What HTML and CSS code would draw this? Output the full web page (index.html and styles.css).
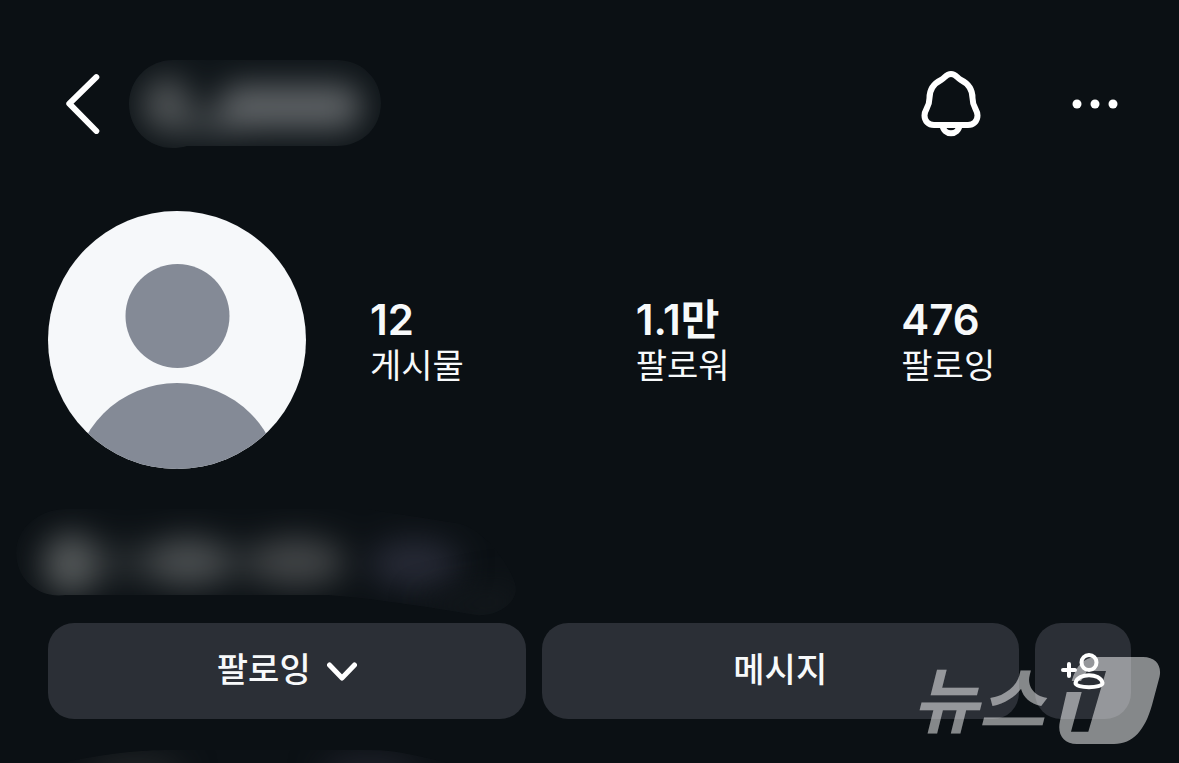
FILE: index.html
```
<!DOCTYPE html>
<html lang="ko">
<head>
  <meta charset="UTF-8" />
  <meta name="viewport" content="width=device-width, initial-scale=1" />
  <title>프로필</title>
  <link rel="stylesheet" href="styles.css">
</head>
<body>
  <header class="topbar">
    <button class="icon-btn" aria-label="뒤로">
      <svg width="34" height="60" viewBox="0 0 34 60"><path d="M30.300 3.200 L3.300 29.700 L30.300 57" /></svg>
    </button>
    <svg class="username" width="252" height="90" viewBox="0 0 252 90" aria-hidden="true">
      <defs>
        <clipPath id="nameClip"><path d="M44 1 H208 C234 1 252 21 252 44 C252 69 233 87 208 87 H58 C26 96 0 74 0 45 C0 20 20 1 44 1 Z" /></clipPath>
        <filter id="soft" x="-100%" y="-100%" width="300%" height="300%" color-interpolation-filters="sRGB"><feGaussianBlur stdDeviation="16" /></filter>
      </defs>
      <g clip-path="url(#nameClip)">
        <rect width="252" height="90" fill="#0f1519" />
        <g filter="url(#soft)">
          <ellipse cx="38" cy="46" rx="25" ry="28" fill="#505456" />
          <rect x="50" y="54" width="60" height="22" fill="#43484b" />
          <rect x="90" y="26" width="142" height="44" rx="18" fill="#606467" />
        </g>
      </g>
    </svg>
    <div class="topbar-actions">
      <button class="icon-btn" aria-label="알림">
        <svg width="60" height="68" viewBox="0 0 60 68">
          <path d="M30 4 C25 4 24 8 20 10 C12 14 8.500 20 8.500 28 C8.500 38 3.500 39 3.500 45.500 C3.500 51 7.500 55 13 55 H47 C52.500 55 56.500 51 56.500 45.500 C56.500 39 51.500 38 51.500 28 C51.500 20 48 14 40 10 C36 8 35 4 30 4 Z" />
          <path d="M21.500 55 C22.500 66 37.500 66 38.500 55" />
        </svg>
      </button>
      <button class="icon-btn" aria-label="더보기">
        <svg class="dots" width="46" height="10" viewBox="0 0 46 10"><circle cx="5" cy="5" r="4.500" /><circle cx="23" cy="5" r="4.500" /><circle cx="41" cy="5" r="4.500" /></svg>
      </button>
    </div>
  </header>

  <main>
    <section class="profile">
      <svg class="avatar" width="258" height="258" viewBox="0 0 258 258" role="img" aria-label="프로필 사진">
        <clipPath id="avatarClip"><circle cx="129" cy="129" r="129" /></clipPath>
        <g clip-path="url(#avatarClip)">
          <rect width="258" height="258" fill="#f6f8fa" />
          <circle cx="129.500" cy="105" r="52" fill="#848a96" />
          <circle cx="129" cy="276" r="104" fill="#848a96" />
        </g>
      </svg>
      <ul class="stats">
        <li><strong>12</strong><span>게시물</span></li>
        <li><strong>1.1만</strong><span>팔로워</span></li>
        <li><strong>476</strong><span>팔로잉</span></li>
      </ul>
    </section>

    <svg class="bio" width="500" height="108" viewBox="0 0 500 108" aria-hidden="true">
      <clipPath id="bioClip"><path d="M50 0 H350 L440 14 C470 18 500 65 500 80 C500 96 478 108 460 106 C410 98 370 91 312 86 H50 C20 90 0 68 0 44 C0 20 22 0 50 0 Z" /></clipPath>
      <g clip-path="url(#bioClip)">
        <rect width="500" height="108" fill="#0c1115" />
        <g filter="url(#soft)">
          <ellipse cx="55" cy="55" rx="29" ry="31" fill="#545859" />
          <rect x="80" y="34" width="250" height="40" fill="#24292c" />
          <ellipse cx="172" cy="53" rx="41" ry="25" fill="#4a4e50" />
          <ellipse cx="280" cy="53" rx="45" ry="25" fill="#424547" />
          <ellipse cx="398" cy="55" rx="46" ry="25" fill="#272a36" />
        </g>
        <path d="M400 94 L500 74 V108 H430 Z" fill="#14191d" filter="url(#soft)" />
      </g>
    </svg>

    <div class="actions">
      <button class="btn">
        팔로잉
        <svg width="30" height="20" viewBox="2 0 30 20"><path d="M4.500 4 L17 17 L29.500 4" /></svg>
      </button>
      <button class="btn">메시지</button>
      <button class="btn" aria-label="사람 추천">
        <svg class="add-user" width="46" height="38" viewBox="0 0 46 38">
          <path d="M3 18 H15 M9 12 V24" />
          <circle cx="29" cy="10.500" r="7.500" />
          <path d="M15.500 31 C18 20.500 40 20.500 42.500 31 C43 36.500 15 36.500 15.500 31 Z" />
        </svg>
      </button>
    </div>

    <svg class="next-row" width="390" height="13" viewBox="0 0 390 13" aria-hidden="true">
      <clipPath id="nextClip"><path d="M0 13 C50 3 80 0 110 0 H310 C340 0 365 8 390 13 Z" /></clipPath>
      <g clip-path="url(#nextClip)">
        <rect width="390" height="13" fill="#0c1115" />
        <ellipse cx="75" cy="24" rx="50" ry="16" fill="#25282a" filter="url(#soft)" />
        <ellipse cx="310" cy="24" rx="50" ry="16" fill="#23252f" filter="url(#soft)" />
      </g>
    </svg>
  </main>

  <div class="watermark">
    <span>뉴스</span>
    <svg width="102" height="88" viewBox="0 0 102 88" aria-hidden="true">
      <path d="M12.700 24 C17 9 25 0 37 0 H84 C97 0 103 9 100.500 20 L93 48 C86 73 74 87 55 87 H18 C4 87 -2 77 1 64 L7.700 35 H22.700 L12 74.700 H29.300 L47 14 H28 L22 24 Z" />
    </svg>
  </div>
</body>
</html>
```
FILE: styles.css
```
* {
  box-sizing: border-box;
}
body {
  margin: 0;
  position: relative;
  background: #0b1014;
  color: #f7f9fa;
  font-family: Inter, 'Noto Sans CJK KR', sans-serif;
}
svg {
  display: block;
  flex-shrink: 0;
}
button {
  border: none;
  padding: 0;
  color: inherit;
  font-family: inherit;
  cursor: pointer;
}
button path, button circle {
  fill: none;
  stroke: #fff;
  stroke-width: 6;
  stroke-linecap: round;
  stroke-linejoin: round;
}
.icon-btn {
  background: none;
}
.topbar {
  display: flex;
  align-items: center;
  padding: 59px 61px 0 66px;
}
.username {
  margin-left: 29px;
}
.topbar-actions {
  display: flex;
  align-items: center;
  gap: 91px;
  margin-left: auto;
}
.dots circle {
  fill: #fff;
  stroke: none;
}

.profile {
  display: flex;
  align-items: center;
  gap: 64px;
  padding: 62px 12px 0 48px;
}
.stats {
  flex: 1;
  display: grid;
  grid-template-columns: repeat(3, 1fr);
  margin: 0;
  padding: 4px 0 0;
  list-style: none;
}
.stats strong, .stats span {
  display: block;
}
.stats strong {
  font-size: 42px;
  font-weight: 600;
  line-height: 48px;
}
.stats span {
  font-size: 34px;
  line-height: 44px;
}

.bio {
  margin: 40px 0 6px 16px;
}

.actions {
  display: grid;
  grid-template-columns: 1fr 1fr 96px;
  gap: 16px;
  padding: 0 48px;
}
.btn {
  display: flex;
  align-items: center;
  justify-content: center;
  gap: 16px;
  height: 96px;
  padding-bottom: 8px;
  border-radius: 26px;
  background: #2b2f36;
  font-size: 34px;
  font-weight: 500;
}
.btn svg {
  margin-top: 8px;
}
.btn path {
  stroke-width: 5;
}
.btn .add-user path, .btn .add-user circle {
  stroke-width: 4;
}

.next-row {
  margin: 31px 0 0 60px;
}

.watermark {
  position: absolute;
  right: 18px;
  bottom: 18px;
  display: flex;
  align-items: center;
  gap: 14px;
  opacity: 0.5;
  color: #fff;
  fill: #fff;
  pointer-events: none;
}
.watermark span {
  font-size: 72px;
  font-weight: 700;
  font-style: italic;
  line-height: 88px;
}
```
